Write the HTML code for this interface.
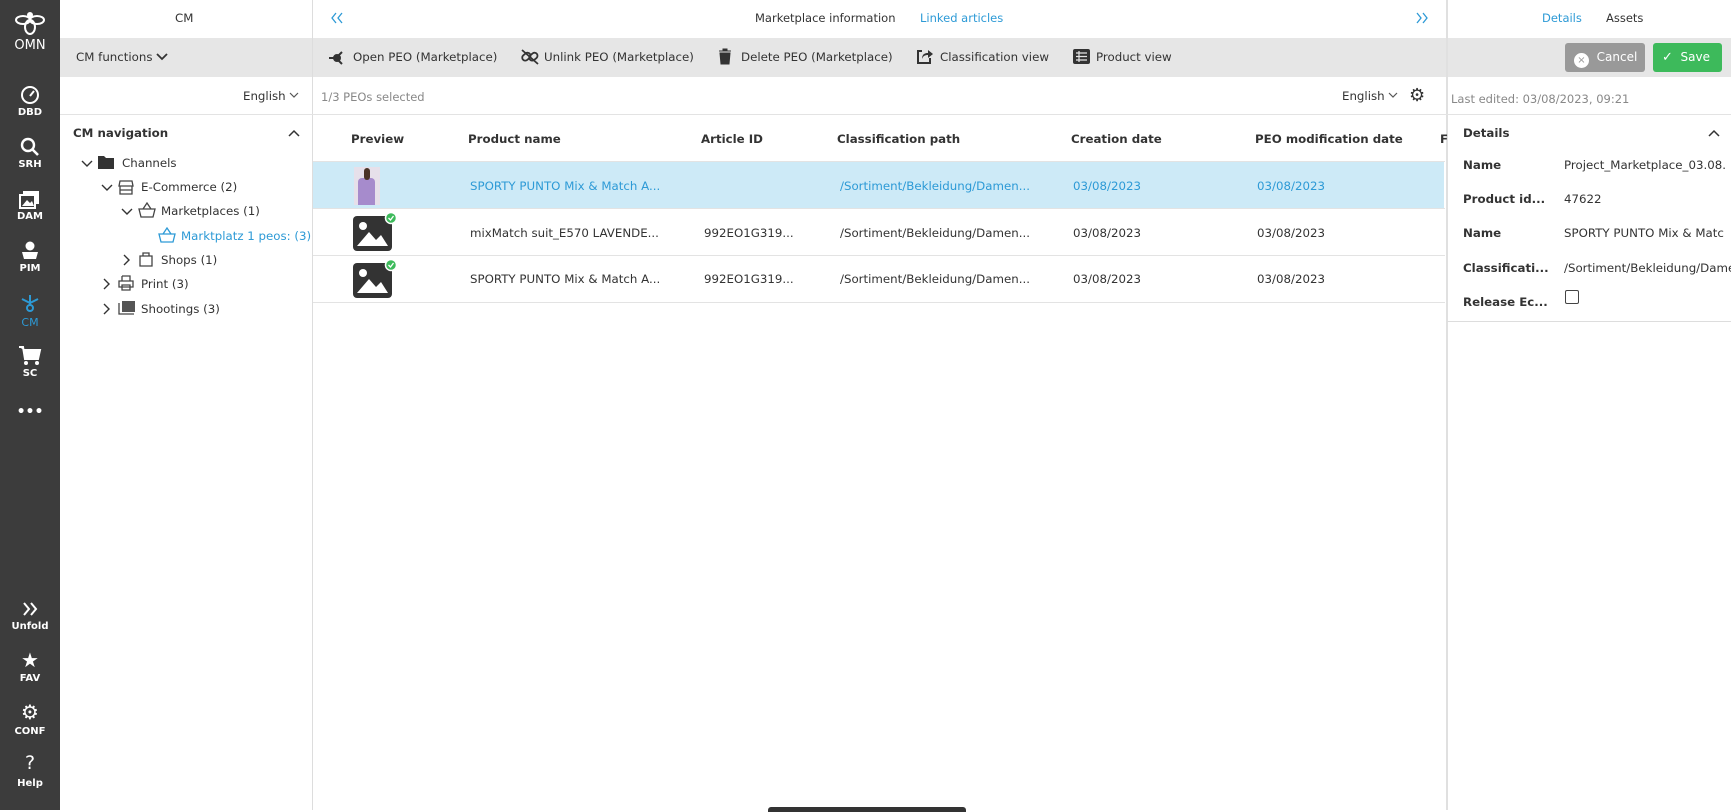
<!DOCTYPE html>
<html><head><meta charset="utf-8"><style>
*{box-sizing:border-box;margin:0;padding:0}
body{width:1731px;height:810px;overflow:hidden;background:#fff;font-family:"DejaVu Sans","Liberation Sans",sans-serif;font-size:11.8px;color:#333;position:relative}
.a{position:absolute;white-space:nowrap}
.sb{position:absolute;left:0;top:0;width:60px;height:810px;background:#3c3c3c}
.si{position:absolute;left:0;width:60px;text-align:center;color:#fff;font-size:10px;font-weight:bold}
.gray{position:absolute;top:38px;height:39px;background:#e6e6e6}
.vl{position:absolute;top:0;width:1px;height:810px;background:#ddd}
.hl{position:absolute;height:1px;background:#e3e3e3}
.b{font-weight:bold}
.blue{color:#2d9ad6}
svg{position:absolute}
</style></head><body>
<div class="sb"></div>
<svg style="left:14px;top:10px" width="32" height="28" viewBox="0 0 32 28"><g fill="none" stroke="#fff" stroke-width="2"><ellipse cx="9" cy="10" rx="7" ry="4"/><ellipse cx="23" cy="10" rx="7" ry="4"/><ellipse cx="16" cy="17" rx="5" ry="7"/></g><circle cx="16" cy="5" r="3" fill="#fff"/></svg>
<div class="si" style="top:38px;font-size:13px;font-weight:normal">OMN</div>
<svg style="left:20px;top:85px" width="20" height="20" viewBox="0 0 20 20"><circle cx="10" cy="10" r="8" fill="none" stroke="#fff" stroke-width="2"/><path d="M10 11 L14 6" stroke="#fff" stroke-width="2"/></svg>
<div class="si" style="top:107px">DBD</div>
<svg style="left:20px;top:137px" width="20" height="20" viewBox="0 0 20 20"><circle cx="8" cy="8" r="6" fill="none" stroke="#fff" stroke-width="2.4"/><path d="M12 12 L18 18" stroke="#fff" stroke-width="2.6"/></svg>
<div class="si" style="top:159px">SRH</div>
<svg style="left:19px;top:190px" width="22" height="20" viewBox="0 0 22 20"><rect x="4" y="1" width="16" height="13" fill="#fff"/><rect x="1" y="5" width="15" height="13" fill="#3c3c3c" stroke="#fff" stroke-width="2"/><path d="M3 16 L8 10 L11 13 L13 11 L15 16Z" fill="#fff"/></svg>
<div class="si" style="top:211px">DAM</div>
<svg style="left:20px;top:241px" width="20" height="20" viewBox="0 0 20 20"><circle cx="10" cy="5" r="4.5" fill="#fff"/><path d="M2 11 L18 11 L16 18 L4 18Z" fill="#fff"/></svg>
<div class="si" style="top:263px">PIM</div>
<svg style="left:20px;top:293px" width="20" height="20" viewBox="0 0 20 20"><g stroke="#2d9ad6" stroke-width="2" fill="none"><path d="M10 2 V12 M2 6 L10 10 L18 6"/><circle cx="10" cy="15" r="3"/></g></svg>
<div class="si" style="top:316px;color:#2d9ad6;font-weight:normal;font-size:11px">CM</div>
<svg style="left:18px;top:345px" width="24" height="22" viewBox="0 0 24 22"><path d="M1 2 H5 L7 14 H20 L22 5 H6" fill="#fff" stroke="#fff" stroke-width="2"/><circle cx="8" cy="18" r="2" fill="#fff"/><circle cx="19" cy="18" r="2" fill="#fff"/></svg>
<div class="si" style="top:368px">SC</div>
<div class="si" style="top:404px;font-size:14px">•••</div>
<svg style="left:21px;top:601px" width="18" height="16"><path d="M3 2 L8 8 L3 14 M10 2 L15 8 L10 14" fill="none" stroke="#fff" stroke-width="2"/></svg>
<div class="si" style="top:621px">Unfold</div>
<div class="si" style="top:648px;font-size:20px">★</div>
<div class="si" style="top:673px">FAV</div>
<div class="si" style="top:700px;font-size:20px">⚙</div>
<div class="si" style="top:726px">CONF</div>
<div class="si" style="top:752px;font-size:19px;font-weight:normal">?</div>
<div class="si" style="top:778px">Help</div>

<div class="gray" style="left:60px;width:1671px"></div>
<div class="vl" style="left:312px"></div>
<div class="vl" style="left:1446px;background:#e0e0e0;width:2px"></div>
<div class="hl" style="left:60px;top:114px;width:1671px"></div>

<!-- left pane -->
<div class="a" style="left:175px;top:11px">CM</div>
<div class="a" style="left:76px;top:50px">CM functions</div>
<svg style="left:156px;top:52px" width="12" height="9"><path d="M1 2 L6 7 L11 2" fill="none" stroke="#333" stroke-width="1.8"/></svg>
<div class="a" style="left:243px;top:89px">English</div>
<svg style="left:289px;top:92px" width="10" height="7"><path d="M1 1 L5 5 L9 1" fill="none" stroke="#555" stroke-width="1.2"/></svg>
<div class="a b" style="left:73px;top:126px">CM navigation</div>
<svg style="left:288px;top:129px" width="12" height="8"><path d="M1 7 L6 2 L11 7" fill="none" stroke="#333" stroke-width="1.5"/></svg>
<svg style="left:81px;top:160px" width="12" height="8"><path d="M1 1 L6 6 L11 1" fill="none" stroke="#333" stroke-width="1.4"/></svg>
<svg style="left:98px;top:155px" width="16" height="14"><path d="M0 1 H6 L8 3 H16 V14 H0Z" fill="#333"/></svg>
<div class="a" style="left:122px;top:156px">Channels</div>
<svg style="left:101px;top:184px" width="12" height="8"><path d="M1 1 L6 6 L11 1" fill="none" stroke="#333" stroke-width="1.4"/></svg>
<svg style="left:118px;top:179px" width="16" height="16"><g fill="none" stroke="#444" stroke-width="1.3"><path d="M2 2 H14 L15 7 H1Z M2 7 V15 H14 V7 M2 11 H14"/></g></svg>
<div class="a" style="left:141px;top:180px">E-Commerce (2)</div>
<svg style="left:121px;top:208px" width="12" height="8"><path d="M1 1 L6 6 L11 1" fill="none" stroke="#333" stroke-width="1.4"/></svg>
<svg style="left:138px;top:202px" width="18" height="16"><g fill="none" stroke="#444" stroke-width="1.3"><path d="M1 7 H17 L15 15 H3Z M5 7 L9 1 L13 7"/></g></svg>
<div class="a" style="left:161px;top:204px">Marketplaces (1)</div>
<svg style="left:158px;top:227px" width="18" height="16"><g fill="none" stroke="#2d9ad6" stroke-width="1.3"><path d="M1 7 H17 L15 15 H3Z M5 7 L9 1 L13 7"/></g></svg>
<div class="a blue" style="left:181px;top:229px">Marktplatz 1 peos: (3)</div>
<svg style="left:123px;top:254px" width="8" height="12"><path d="M1 1 L6 6 L1 11" fill="none" stroke="#333" stroke-width="1.4"/></svg>
<svg style="left:138px;top:251px" width="16" height="16"><g fill="none" stroke="#444" stroke-width="1.3"><path d="M2 5 H14 V15 H2Z M5 5 V2 H11 V5"/></g></svg>
<div class="a" style="left:161px;top:253px">Shops (1)</div>
<svg style="left:103px;top:278px" width="8" height="12"><path d="M1 1 L6 6 L1 11" fill="none" stroke="#333" stroke-width="1.4"/></svg>
<svg style="left:118px;top:275px" width="16" height="16"><g fill="none" stroke="#444" stroke-width="1.3"><path d="M4 1 H12 V6 M4 6 V1 M1 6 H15 V12 H1Z M4 10 H12 V15 H4Z"/></g></svg>
<div class="a" style="left:141px;top:277px">Print (3)</div>
<svg style="left:103px;top:303px" width="8" height="12"><path d="M1 1 L6 6 L1 11" fill="none" stroke="#333" stroke-width="1.4"/></svg>
<svg style="left:118px;top:300px" width="18" height="15"><path d="M1 3 V14 H16" fill="none" stroke="#444" stroke-width="1.3"/><rect x="4" y="1" width="13" height="11" fill="#555"/></svg>
<div class="a" style="left:141px;top:302px">Shootings (3)</div>

<!-- middle header -->
<svg style="left:330px;top:12px" width="14" height="12"><path d="M6 1 L2 6 L6 11 M12 1 L8 6 L12 11" fill="none" stroke="#2d9ad6" stroke-width="1.3"/></svg>
<div class="a" style="left:755px;top:11px;font-size:11.5px">Marketplace information</div>
<div class="a blue" style="left:920px;top:11px;font-size:11.5px">Linked articles</div>
<svg style="left:1415px;top:12px" width="14" height="12"><path d="M2 1 L6 6 L2 11 M8 1 L12 6 L8 11" fill="none" stroke="#2d9ad6" stroke-width="1.3"/></svg>
<svg style="left:328px;top:49px" width="18" height="16"><g stroke="#333" stroke-width="2" fill="none"><path d="M1 9 H8 M8 9 L14 3 M8 9 L14 15"/><circle cx="9" cy="9" r="3" fill="#333"/></g></svg>
<div class="a" style="left:353px;top:50px">Open PEO (Marketplace)</div>
<svg style="left:520px;top:48px" width="20" height="18"><g stroke="#333" stroke-width="1.8" fill="none"><rect x="2" y="6" width="9" height="6" rx="3" transform="rotate(-40 6 9)"/><rect x="9" y="6" width="9" height="6" rx="3" transform="rotate(-40 13 9)"/><path d="M2 2 L18 16"/></g></svg>
<div class="a" style="left:544px;top:50px">Unlink PEO (Marketplace)</div>
<svg style="left:718px;top:48px" width="14" height="17"><path d="M1 3 H13 M5 3 V1 H9 V3 M2 5 H12 L11 16 H3Z" fill="#333" stroke="#333"/></svg>
<div class="a" style="left:741px;top:50px">Delete PEO (Marketplace)</div>
<svg style="left:916px;top:48px" width="18" height="17"><path d="M6 3 H2 V15 H14 V10" fill="none" stroke="#333" stroke-width="2"/><path d="M6 11 C6 6 9 5 12 5 V2 L17 6 L12 10 V7 C9 7 7 8 6 11Z" fill="#333"/></svg>
<div class="a" style="left:940px;top:50px">Classification view</div>
<svg style="left:1073px;top:49px" width="17" height="15"><rect x="0" y="0" width="17" height="15" rx="2" fill="#333"/><path d="M3 4 H14 M3 7.5 H14 M3 11 H14 M6 2 V13" stroke="#e6e6e6" stroke-width="1.2"/></svg>
<div class="a" style="left:1096px;top:50px">Product view</div>
<div class="a" style="left:321px;top:90px;color:#888;font-size:11.5px">1/3 PEOs selected</div>
<div class="a" style="left:1342px;top:89px">English</div>
<svg style="left:1388px;top:92px" width="10" height="7"><path d="M1 1 L5 5 L9 1" fill="none" stroke="#555" stroke-width="1.2"/></svg>
<div class="a" style="left:1409px;top:85px;font-size:18px">⚙</div>

<!-- table -->
<div class="a b" style="left:351px;top:132px">Preview</div>
<div class="a b" style="left:468px;top:132px">Product name</div>
<div class="a b" style="left:701px;top:132px">Article ID</div>
<div class="a b" style="left:837px;top:132px">Classification path</div>
<div class="a b" style="left:1071px;top:132px">Creation date</div>
<div class="a b" style="left:1255px;top:132px">PEO modification date</div>
<div class="a b" style="left:1440px;top:132px">F</div>
<div class="hl" style="left:313px;top:161px;width:1132px"></div>
<div class="a" style="left:313px;top:162px;width:1131px;height:46px;background:#cdeaf7"></div>
<div class="hl" style="left:313px;top:208px;width:1132px"></div>
<div class="hl" style="left:313px;top:255px;width:1132px"></div>
<div class="hl" style="left:313px;top:302px;width:1132px"></div>
<div class="a" style="left:354px;top:167px;width:26px;height:38px;background:#e6e0ea"></div>
<div class="a" style="left:358px;top:178px;width:17px;height:27px;background:#a68bcc;border-radius:4px 4px 0 0"></div>
<div class="a" style="left:364px;top:168px;width:6px;height:12px;background:#4a3326;border-radius:3px"></div>
<div class="a blue" style="left:470px;top:179px">SPORTY PUNTO Mix &amp; Match A...</div>
<div class="a blue" style="left:840px;top:179px">/Sortiment/Bekleidung/Damen...</div>
<div class="a blue" style="left:1073px;top:179px">03/08/2023</div>
<div class="a blue" style="left:1257px;top:179px">03/08/2023</div>
<svg style="left:352px;top:212px" width="46" height="40"><rect x="1" y="4" width="39" height="35" rx="4" fill="#333"/><circle cx="11" cy="14" r="4" fill="#fff"/><path d="M5 34 L17 20 L24 28 L29 23 L36 34Z" fill="#fff"/><circle cx="39" cy="6" r="5.5" fill="#3dba5b" stroke="#fff" stroke-width="1.5"/><path d="M36.5 6 L38.5 8 L41.5 4" stroke="#fff" stroke-width="1.3" fill="none"/></svg>
<div class="a" style="left:470px;top:226px">mixMatch suit_E570 LAVENDE...</div>
<div class="a" style="left:704px;top:226px">992EO1G319...</div>
<div class="a" style="left:840px;top:226px">/Sortiment/Bekleidung/Damen...</div>
<div class="a" style="left:1073px;top:226px">03/08/2023</div>
<div class="a" style="left:1257px;top:226px">03/08/2023</div>
<svg style="left:352px;top:259px" width="46" height="40"><rect x="1" y="4" width="39" height="35" rx="4" fill="#333"/><circle cx="11" cy="14" r="4" fill="#fff"/><path d="M5 34 L17 20 L24 28 L29 23 L36 34Z" fill="#fff"/><circle cx="39" cy="6" r="5.5" fill="#3dba5b" stroke="#fff" stroke-width="1.5"/><path d="M36.5 6 L38.5 8 L41.5 4" stroke="#fff" stroke-width="1.3" fill="none"/></svg>
<div class="a" style="left:470px;top:272px">SPORTY PUNTO Mix &amp; Match A...</div>
<div class="a" style="left:704px;top:272px">992EO1G319...</div>
<div class="a" style="left:840px;top:272px">/Sortiment/Bekleidung/Damen...</div>
<div class="a" style="left:1073px;top:272px">03/08/2023</div>
<div class="a" style="left:1257px;top:272px">03/08/2023</div>
<div class="a" style="left:768px;top:807px;width:198px;height:5px;background:#333;border-radius:3px 3px 0 0"></div>

<!-- right pane -->
<div class="a blue" style="left:1542px;top:11px;font-size:11.5px">Details</div>
<div class="a" style="left:1606px;top:11px;font-size:11.5px">Assets</div>
<div class="a" style="left:1565px;top:43px;width:80px;height:29px;background:#999;border-radius:3px;color:#fff;padding:7px 0 0 9px;font-size:12px"><span style="display:inline-block;width:15px;height:15px;border-radius:50%;background:#fff;color:#999;font-size:10px;text-align:center;line-height:15px;vertical-align:-2px">×</span>&nbsp; Cancel</div>
<div class="a" style="left:1653px;top:43px;width:69px;height:29px;background:#3dba5b;border-radius:3px;color:#fff;padding:7px 0 0 9px;font-size:12px"><span style="font-size:13px">✓</span>&nbsp; Save</div>
<div class="a" style="left:1451px;top:92px;color:#888;font-size:11.5px">Last edited: 03/08/2023, 09:21</div>
<div class="a b" style="left:1463px;top:126px">Details</div>
<svg style="left:1708px;top:129px" width="12" height="8"><path d="M1 7 L6 2 L11 7" fill="none" stroke="#333" stroke-width="1.5"/></svg>
<div class="a b" style="left:1463px;top:158px">Name</div><div class="a" style="left:1564px;top:158px">Project_Marketplace_03.08.</div>
<div class="a b" style="left:1463px;top:192px">Product id...</div><div class="a" style="left:1564px;top:192px">47622</div>
<div class="a b" style="left:1463px;top:226px">Name</div><div class="a" style="left:1564px;top:226px;width:167px;overflow:hidden">SPORTY PUNTO Mix &amp; Matc</div>
<div class="a b" style="left:1463px;top:261px">Classificati...</div><div class="a" style="left:1564px;top:261px;width:167px;overflow:hidden">/Sortiment/Bekleidung/Damen</div>
<div class="a b" style="left:1463px;top:295px">Release Ec...</div>
<div class="a" style="left:1565px;top:290px;width:14px;height:14px;border:1.5px solid #444;border-radius:2px"></div>
<div class="hl" style="left:1447px;top:321px;width:284px;background:#ddd"></div>
</body></html>
